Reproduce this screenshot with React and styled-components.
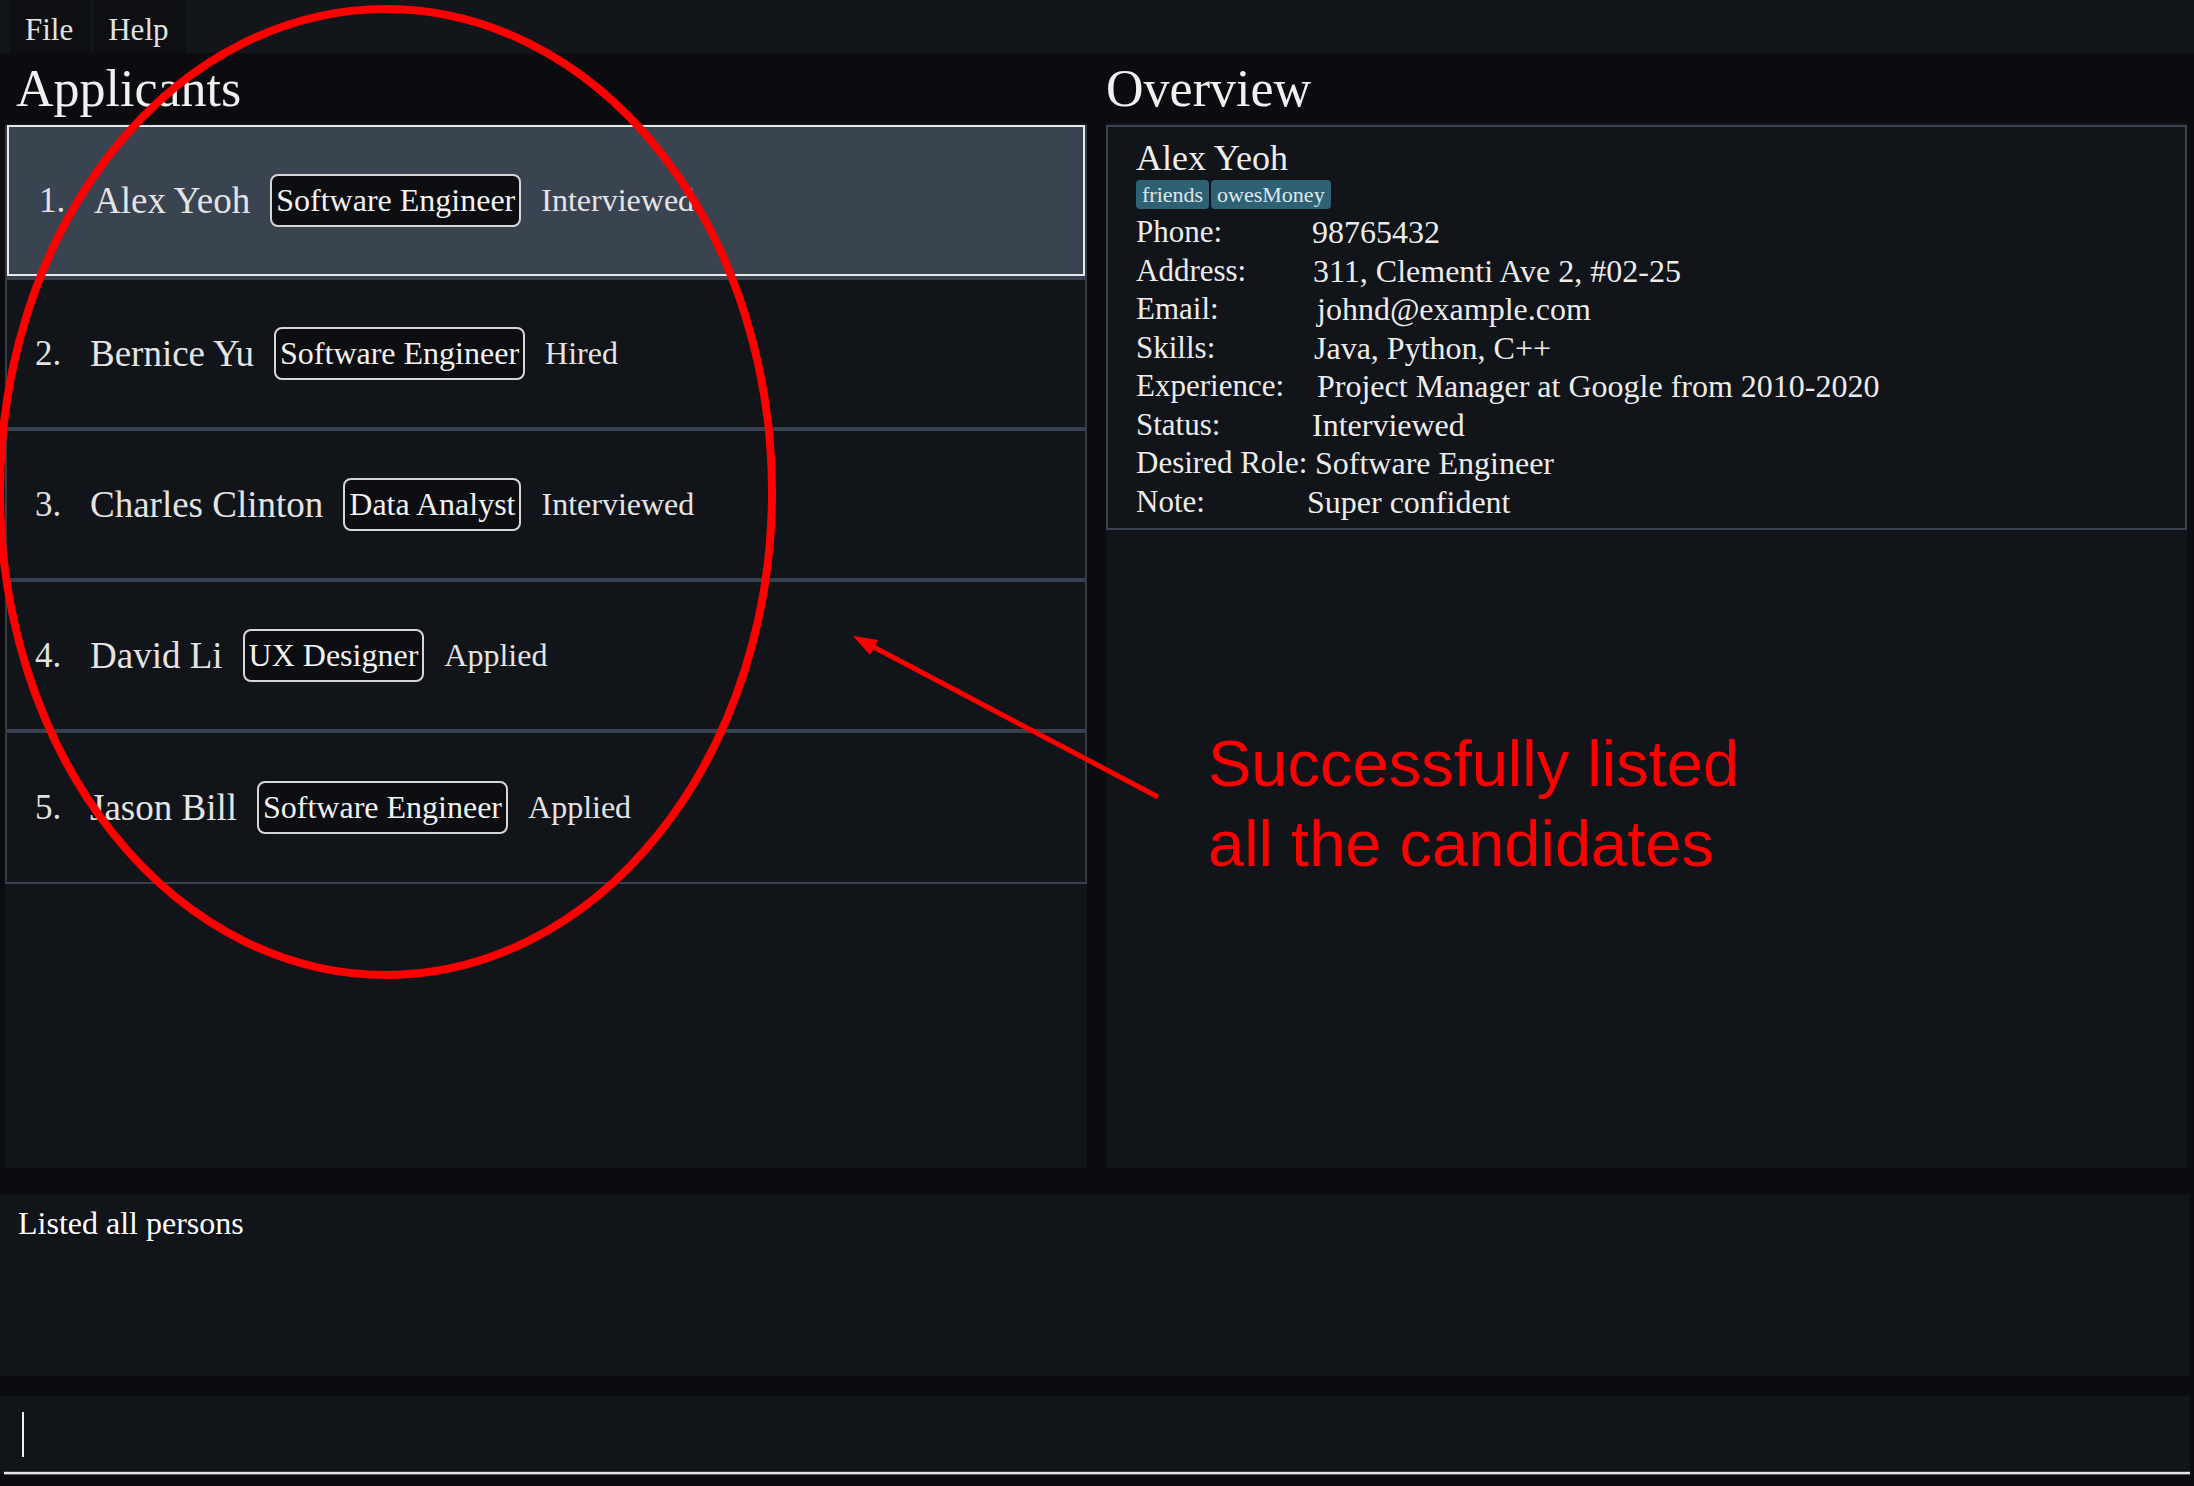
import React from "react";
import styled, { createGlobalStyle } from "styled-components";

const GlobalStyle = createGlobalStyle`
  html, body { margin: 0; padding: 0; background: #0b0c0f; }
  body { font-family: "Liberation Serif", "DejaVu Serif", serif; color: #e6e6e6; }
  * { box-sizing: border-box; }
`;

const Page = styled.div`
  position: relative;
  width: 2194px;
  height: 1486px;
  background: #0b0c0f;
  display: flex;
  flex-direction: column;
  overflow: hidden;
`;

const MenuBar = styled.div`
  height: 53px;
  background: #121519;
  display: flex;
  gap: 3px;
  padding-left: 10px;
`;

const MenuItem = styled.div`
  height: 53px;
  background: #0d0f12;
  padding: 6px 17px 0 15px;
  line-height: 47px;
  font-size: 31px;
  color: #e2e2e2;
`;

const Main = styled.div`
  height: 1115px;
  display: flex;
  gap: 19px;
  padding: 0 7px 0 5px;
`;

const Column = styled.div`
  width: ${(p) => p.$width}px;
  display: flex;
  flex-direction: column;
`;

const Title = styled.div`
  height: 70px;
  padding: 2px 0 0 ${(p) => p.$indent}px;
  line-height: 68px;
  font-size: 52px;
  color: #f0f0f0;
`;

const Panel = styled.div`
  flex: 1;
  background: #111419;
  padding-top: 2px;
`;

const List = styled.div`
  border-left: 2px solid #343c48;
  border-right: 2px solid #343c48;
`;

const Cell = styled.div`
  height: ${(p) => (p.$selected ? 155 : 151)}px;
  border-bottom: 4px solid #384150;
  background: ${(p) => (p.$selected ? "#3a4350" : "#111419")};
  &:last-child {
    border-bottom-width: 2px;
  }
`;

const CardBody = styled.div`
  height: 100%;
  display: flex;
  align-items: center;
  padding-left: ${(p) => (p.$selected ? 30 : 28)}px;
  border: ${(p) => (p.$selected ? "2px solid #e8e8e8" : "none")};
`;

const Index = styled.span`
  min-width: 55px;
  font-size: 35px;
  color: #e2e2e2;
`;

const Name = styled.span`
  font-size: 37px;
  color: #e4e4e4;
  margin-right: 20px;
`;

const RoleBadge = styled.span`
  height: 53px;
  display: inline-flex;
  align-items: center;
  padding: 0 4px;
  border: 2px solid #d6d6d6;
  border-radius: 8px;
  background: #0c0e11;
  font-size: 32px;
  color: #f2f2f2;
  margin-right: 20px;
`;

const Status = styled.span`
  font-size: 32px;
  color: #e4e4e4;
`;

const Details = styled.div`
  border: 2px solid #3a4350;
  padding: 9px 0 7px 28px;
`;

const DetailName = styled.div`
  font-size: 36px;
  line-height: 44px;
  color: #ededed;
`;

const Tags = styled.div`
  display: flex;
  gap: 2px;
  height: 29px;
`;

const Tag = styled.span`
  height: 29px;
  line-height: 29px;
  padding: 0 6px;
  background: #2f6175;
  border-radius: 4px;
  font-size: 22px;
  color: #dfe7eb;
`;

const FieldGrid = styled.div`
  display: grid;
  grid-template-columns: 177px 1fr;
  margin-top: 4px;
  font-size: 31px;
  line-height: 38.5px;
  color: #ececec;
`;

const Label = styled.span``;

const Value = styled.span`
  font-size: 32px;
  margin-left: ${(p) => p.$shift || 0}px;
`;

const ResultBox = styled.div`
  margin: 26px 4px 0 0;
  height: 182px;
  background: #111419;
  padding: 9px 0 0 18px;
  font-size: 32px;
  line-height: 40px;
  color: #ffffff;
`;

const CommandBox = styled.div`
  margin: 20px 4px 0 0;
  height: 78px;
  background: #111419;
  display: flex;
`;

const CommandField = styled.div`
  flex: 1;
  margin-left: 4px;
  padding: 16px 0 0 18px;
  border-bottom: 2px solid #e6e6e6;
  box-shadow: 0 1px 0 #5a5d62, 0 -1px 0 #3a3d42 inset;
`;

const Caret = styled.div`
  width: 2px;
  height: 45px;
  background: #f0f0f0;
`;

const Overlay = styled.svg`
  position: absolute;
  left: 0;
  top: 0;
  pointer-events: none;
`;

const Note = styled.div`
  position: absolute;
  left: 1208px;
  top: 724px;
  font-family: "Liberation Sans", Arial, sans-serif;
  font-size: 65px;
  line-height: 80px;
  color: #ff0000;
  pointer-events: none;
`;

const people = [
  { name: "Alex Yeoh", role: "Software Engineer", status: "Interviewed" },
  { name: "Bernice Yu", role: "Software Engineer", status: "Hired" },
  { name: "Charles Clinton", role: "Data Analyst", status: "Interviewed" },
  { name: "David Li", role: "UX Designer", status: "Applied" },
  { name: "Jason Bill", role: "Software Engineer", status: "Applied" },
];

const fields = [
  ["Phone:", "98765432", -1],
  ["Address:", "311, Clementi Ave 2, #02-25", 0],
  ["Email:", "johnd@example.com", 4],
  ["Skills:", "Java, Python, C++", 1],
  ["Experience:", "Project Manager at Google from 2010-2020", 4],
  ["Status:", "Interviewed", -1],
  ["Desired Role:", "Software Engineer", 2],
  ["Note:", "Super confident", -6],
];

export default function App() {
  return (
    <>
      <GlobalStyle />
      <Page>
        <MenuBar>
          <MenuItem>File</MenuItem>
          <MenuItem>Help</MenuItem>
        </MenuBar>
        <Main>
          <Column $width={1082}>
            <Title $indent={11}>Applicants</Title>
            <Panel>
              <List>
                {people.map((p, i) => (
                  <Cell key={p.name} $selected={i === 0}>
                    <CardBody $selected={i === 0}>
                      <Index>{i + 1}.</Index>
                      <Name>{p.name}</Name>
                      <RoleBadge>{p.role}</RoleBadge>
                      <Status>{p.status}</Status>
                    </CardBody>
                  </Cell>
                ))}
              </List>
            </Panel>
          </Column>
          <Column $width={1081}>
            <Title $indent={0}>Overview</Title>
            <Panel>
              <Details>
                <DetailName>Alex Yeoh</DetailName>
                <Tags>
                  <Tag>friends</Tag>
                  <Tag>owesMoney</Tag>
                </Tags>
                <FieldGrid>
                  {fields.map(([l, v, s]) => (
                    <React.Fragment key={l}>
                      <Label>{l}</Label>
                      <Value $shift={s}>{v}</Value>
                    </React.Fragment>
                  ))}
                </FieldGrid>
              </Details>
            </Panel>
          </Column>
        </Main>
        <ResultBox>Listed all persons</ResultBox>
        <CommandBox>
          <CommandField>
            <Caret />
          </CommandField>
        </CommandBox>

        <Overlay width="2194" height="1486" viewBox="0 0 2194 1486">
          <ellipse cx="386" cy="492" rx="386" ry="483" fill="none" stroke="#ff0000" strokeWidth="8" />
          <line x1="1158" y1="797" x2="866" y2="643" stroke="#ff0000" strokeWidth="5" />
          <polygon points="853,636 878,640 870,655" fill="#ff0000" />
        </Overlay>
        <Note>
          Successfully listed
          <br />
          all the candidates
        </Note>
      </Page>
    </>
  );
}
